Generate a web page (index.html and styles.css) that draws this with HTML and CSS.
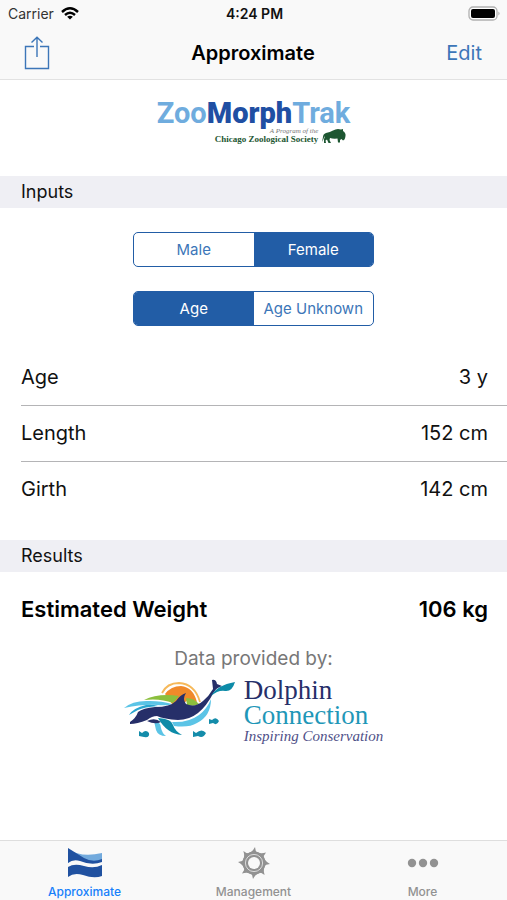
FILE: index.html
```html
<!DOCTYPE html>
<html lang="en">
<head>
    <meta charset="UTF-8">
    <meta name="viewport" content="width=device-width, initial-scale=1.0">
    <title>Approximate</title>
    <link rel="stylesheet" href="styles.css">
</head>
<body>

<header class="top-bar">
    <div class="status-bar">
        <div class="carrier">
            <span>Carrier</span>
            <svg width="18" height="13" viewBox="0 0 18 13" fill="none" stroke="#000" stroke-width="2.4">
                <path d="M1 5 Q9 -2.4 17 5"/>
                <path d="M4 8 Q9 3.4 14 8"/>
                <path d="M9 12.6 L6.1 9.8 Q9 7.6 11.9 9.8 Z" fill="#000" stroke="none"/>
            </svg>
        </div>
        <span class="time">4:24 PM</span>
        <svg class="battery" width="33" height="15" viewBox="0 0 33 15">
            <rect x="1" y="1" width="28" height="13" rx="4" fill="#fff" stroke="#b0b0b0" stroke-width="1.3"/>
            <rect x="3" y="3" width="24" height="9" rx="2" fill="#000"/>
            <path d="M30.5 5.5 Q32.5 7.5 30.5 9.5 Z" fill="#999"/>
        </svg>
    </div>
    <div class="nav-bar">
        <button class="share" aria-label="Share">
            <svg width="26" height="34" viewBox="0 0 26 34" fill="none" stroke="#3c76b8" stroke-width="1.4">
                <path d="M10 10.5 H1.5 V32.5 H24.5 V10.5 H16"/>
                <path d="M13 21 V1.5 M7.5 6.5 L13 1.2 L18.5 6.5"/>
            </svg>
        </button>
        <h1>Approximate</h1>
        <button class="edit">Edit</button>
    </div>
</header>

<main>
    <div class="zoo-logo">
        <div class="zoo-name"><span>Zoo</span><b>Morph</b><span>Trak</span></div>
        <div class="zoo-sub">
            <div class="zoo-words">
                <i>A Program of the</i>
                <strong>Chicago Zoological Society</strong>
            </div>
            <svg width="25" height="16" viewBox="0 0 25 16" fill="#1d5631">
                <path d="M1 14 L2 9 Q2 6 5 5 Q9 4 12 2.5 Q16 0 20 1.5 L22 1 L22 3 Q25 5 24.5 8 Q24 12 22 12.5 L20.5 11 L19 12 L19 14.5 H17 L16.5 10.5 Q12 11 9 10 L8.5 12 L10 15 H7.5 L6 11.5 L4.5 12.5 L5 15 H3 L3 11 Q4 9.5 3.5 8 L2.5 11 Z"/>
            </svg>
        </div>
    </div>

    <h2>Inputs</h2>
    <div class="choices">
        <div class="segmented" role="radiogroup" aria-label="Sex">
            <label><input type="radio" name="sex"><span>Male</span></label>
            <label><input type="radio" name="sex" checked><span>Female</span></label>
        </div>
        <div class="segmented" role="radiogroup" aria-label="Age">
            <label><input type="radio" name="age" checked><span>Age</span></label>
            <label><input type="radio" name="age"><span>Age Unknown</span></label>
        </div>
    </div>
    <dl class="rows">
        <div><dt>Age</dt><dd>3 y</dd></div>
        <div><dt>Length</dt><dd>152 cm</dd></div>
        <div><dt>Girth</dt><dd>142 cm</dd></div>
    </dl>

    <h2>Results</h2>
    <dl class="rows result">
        <div><dt>Estimated Weight</dt><dd>106 kg</dd></div>
    </dl>
    <p class="provided">Data provided by:</p>
    <div class="dolphin-logo">
        <svg width="112" height="64" viewBox="0 0 112 64">
            <!-- sun -->
            <path d="M38 15 Q43 5 55 5 Q71 6 76 24" fill="none" stroke="#f6b95a" stroke-width="1.8"/>
            <path d="M41 16 Q47 8 57 8 Q69 9 73 24 L66 21 L58 26 H48 Z" fill="#f0892a"/>
            <!-- hills -->
            <path d="M20 22 Q34 15 55 18 L49 25 Q36 20 20 22 Z" fill="#8bbf3d"/>
            <path d="M62 20 Q70 20 75 26 Q70 29 63 27 Z" fill="#8bbf3d"/>
            <!-- water -->
            <path d="M0 30 Q9 22 26 23 Q38 23 48 26 Q44 28 33 27 Q20 26 0 30 Z" fill="#5bc4e6"/>
            <path d="M5 37 Q9 30 22 27 Q28 26 34 28 Q20 29 14 32 Z" fill="#2aa5cf"/>
            <path d="M87 21 Q87 38 73 45 Q65 50 50 48 L48 44 Q64 45 75 37 Q83 31 87 21 Z" fill="#5bc4e6"/>
            <path d="M30 43 Q37 44 37 50 Q38 55 42 58 Q34 58 32 52 Z" fill="#5bc4e6"/>
            <!-- dolphin -->
            <path d="M6 44 Q12 40 14 34 Q19 30 31 29 Q46 29 52 23 Q56 17 62 15 Q58 21 62 26 Q71 30 79 23 Q85 18 89 11 L88 2 Q92 1 93 6 L98 8 Q92 10 90 14 Q82 29 74 35 Q65 42 54 42 Q40 41 33 38 Q28 38 23 42 Q13 46 6 46 Z" fill="#262f69"/>
            <path d="M23 43 Q31 39 37 44 Q31 47 23 43 Z" fill="#262f69"/>
            <path d="M34 40 Q48 41 49 47 Q51 53 58 57 Q43 56 34 40 Z" fill="#0d8ba8"/>
            <path d="M87 18 Q93 7 111 4 Q108 14 101 13 Q94 12 87 18 Z" fill="#0d8ba8"/>
            <!-- fish -->
            <path d="M15 53 L18 55 Q22 51 25 55 Q26 60 20 59 L15 58 Z M69 53 L72 55 Q78 50 82 55 Q79 61 74 58 L69 59 Z M85 41 L88 42 Q92 38 95 43 Q93 48 89 45 L85 46 Z" fill="#148caa"/>
        </svg>
        <div class="dolphin-words">
            <b>Dolphin</b>
            <span>Connection</span>
            <i>Inspiring Conservation</i>
        </div>
    </div>
</main>

<nav class="tab-bar">
    <a href="#" class="active">
        <svg width="36" height="32" viewBox="0 0 36 32">
            <path d="M1 2 Q14 11 35 6 V14 Q25 18 12 13 Q6 10 1 16 Z" fill="#72aadd"/>
            <path d="M1 1 Q9 6 17 11 Q26 16 35 12 V15 Q25 19 13 14 Q6 12 1 16 Z" fill="#2051a0"/>
            <path d="M1 20 Q7 16 17 19 Q27 22 35 18 V29 Q27 32 16 28 Q7 25 1 30 Z" fill="#2051a0"/>
        </svg>
        Approximate
    </a>
    <a href="#">
        <svg width="34" height="34" viewBox="0 0 34 34" fill="#929292">
            <defs>
                <path id="tooth" d="M9 8 Q15 7 18 1 Q18 5 21 8 Z"/>
            </defs>
            <circle cx="17" cy="17" r="11.5"/>
            <use href="#tooth"/>
            <use href="#tooth" transform="rotate(45 17 17)"/>
            <use href="#tooth" transform="rotate(90 17 17)"/>
            <use href="#tooth" transform="rotate(135 17 17)"/>
            <use href="#tooth" transform="rotate(180 17 17)"/>
            <use href="#tooth" transform="rotate(225 17 17)"/>
            <use href="#tooth" transform="rotate(270 17 17)"/>
            <use href="#tooth" transform="rotate(315 17 17)"/>
            <circle cx="17" cy="17" r="8.6" fill="none" stroke="#f9f9f9" stroke-width="0.7"/>
            <circle cx="17" cy="17" r="6" fill="#f9f9f9"/>
        </svg>
        Management
    </a>
    <a href="#">
        <svg width="32" height="10" viewBox="0 0 32 10" fill="#929292">
            <circle cx="5" cy="5" r="4.2"/>
            <circle cx="16" cy="5" r="4.2"/>
            <circle cx="27" cy="5" r="4.2"/>
        </svg>
        More
    </a>
</nav>

</body>
</html>
```
FILE: styles.css
```css
* {
    box-sizing: border-box;
}
body {
    margin: 0;
    min-height: 100vh;
    display: flex;
    flex-direction: column;
    font-family: Inter, "Liberation Sans", sans-serif;
    background-color: #fff;
    color: #111;
}
svg {
    display: block;
}
button {
    padding: 0;
    border: none;
    background: none;
    font: inherit;
    cursor: pointer;
}
.top-bar {
    background-color: #f9f9f9;
    border-bottom: 1px solid #e2e2e2;
}
.status-bar, .nav-bar {
    display: grid;
    grid-template-columns: 1fr auto 1fr;
    align-items: center;
}
.status-bar {
    height: 27px;
    padding: 0 6px 0 8px;
    font-size: 14px;
}
.carrier {
    display: flex;
    align-items: center;
    gap: 7px;
    color: #333;
}
.time {
    font-weight: 600;
}
.battery {
    justify-self: end;
}
.nav-bar {
    height: 52px;
    padding: 0 25px 0 24px;
    font-size: 20px;
}
.share {
    justify-self: start;
}
.nav-bar h1 {
    margin: 0;
    font-size: 20px;
    font-weight: 600;
    color: #000;
}
.edit {
    justify-self: end;
    color: #3c76b8;
}
main {
    flex: 1;
}

/* ZooMorphTrak logo */
.zoo-logo {
    display: flex;
    flex-direction: column;
    align-items: center;
    padding: 18px 0 32px;
}
.zoo-name {
    font-family: Roboto, "Liberation Sans", sans-serif;
    font-size: 29px;
    line-height: 30px;
    font-weight: bold;
    color: #6facde;
}
.zoo-name b {
    color: #1f4fa3;
}
.zoo-sub {
    display: flex;
    align-items: center;
    gap: 3px;
    padding-left: 54px;
    font-family: "Liberation Serif", serif;
    color: #1d5631;
}
.zoo-words {
    display: flex;
    flex-direction: column;
    font-size: 9px;
    line-height: 10px;
}
.zoo-words i {
    align-self: flex-end;
    font-size: 7px;
    line-height: 6px;
    color: #777;
}

h2 {
    margin: 0;
    padding: 0 21px;
    font-size: 18px;
    line-height: 32px;
    font-weight: 400;
    background-color: #efeff4;
}
.choices {
    display: flex;
    flex-direction: column;
    align-items: center;
    gap: 24px;
    padding: 24px 0;
}
.segmented {
    display: grid;
    grid-template-columns: 1fr 1fr;
    width: 241px;
    border: 1px solid #225da6;
    border-radius: 5px;
    overflow: hidden;
    font-size: 15px;
    line-height: 33px;
    text-align: center;
    color: #3c76b8;
}
.segmented input {
    position: absolute;
    opacity: 0;
}
.segmented span {
    display: block;
}
.segmented input:checked + span {
    background-color: #225da6;
    color: #fff;
}
.rows {
    margin: 0;
    padding-bottom: 23px;
    font-size: 20px;
    line-height: 55px;
}
.rows div {
    display: flex;
    justify-content: space-between;
    margin-left: 21px;
    padding-right: 19px;
}
.rows div + div {
    border-top: 1px solid #b4b4b6;
}
.rows dd {
    margin: 0;
}
.result {
    padding: 10px 0 9px;
    font-size: 22px;
    font-weight: 600;
    color: #000;
}
.provided {
    margin: 0;
    font-size: 19px;
    line-height: 26px;
    text-align: center;
    color: #777;
}

/* Dolphin Connection logo */
.dolphin-logo {
    display: flex;
    justify-content: center;
    gap: 8px;
    padding-top: 6px;
}
.dolphin-words {
    display: flex;
    flex-direction: column;
    font-family: "Liberation Serif", serif;
    font-size: 27px;
    line-height: 25px;
    color: #1f97b8;
}
.dolphin-words b {
    font-weight: 400;
    color: #262f69;
}
.dolphin-words i {
    font-size: 15px;
    line-height: 16px;
    color: #4f5088;
}

.tab-bar {
    display: grid;
    grid-template-columns: repeat(3, 1fr);
    height: 60px;
    background-color: #f9f9f9;
    border-top: 1px solid #dedede;
}
.tab-bar a {
    display: grid;
    grid-template-rows: 44px 14px;
    place-items: center;
    align-content: start;
    font-size: 12px;
    line-height: 14px;
    font-weight: 500;
    text-decoration: none;
    color: #929292;
}
.tab-bar a.active {
    color: #1680fb;
}
```
